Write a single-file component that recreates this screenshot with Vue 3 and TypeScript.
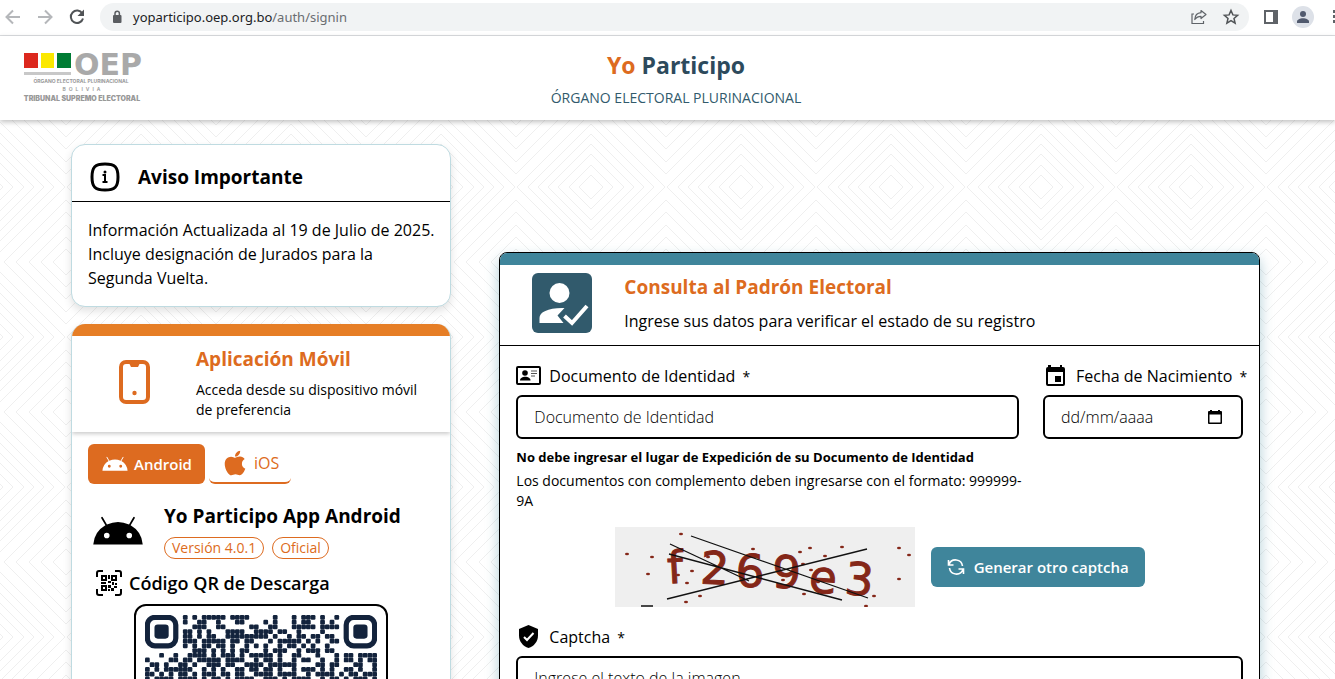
<script setup lang="ts">
import { ref } from 'vue'

interface Cell { x: number; y: number }
interface Glyph { char: string; x: number; y: number; turn: number }

const documento = ref('')
const fecha = ref('')
const captcha = ref('')
const tab = ref<'android' | 'ios'>('android')

const qrRows: string[] = [
  '........1.1.11111.1111.....1...1.111.1..1........',
  '........1..11..1...11....1.1...1.11..1.1.........',
  '..........111..11.....11..11...11111.1111........',
  '........11.1.1...1111..1111.11..1....1...........',
  '........11.1.11..111111111.1..1.11.11.11.........',
  '........111.11111.11.11...1.11111.1.1..11........',
  '........1.1.11.11.1..1.1.1..1.11.1.1..1..........',
  '..........111.1.1.1.11...1.111..1.111.11.........',
  '...1..1..1111.1.111.1.11111.1..11...1...1.11.1111',
  '1....11.11.11111.1111..1.11.1..1.11..1..1.11.1.11',
  '.11.1..11.1..111.11..1111.111111....11.11...11..1',
  '1.1.111111..1.1.1..11.11.11.1..1.111.1.1..11.1..1',
  '11.1.1.11.1.111.11.11..1111.1111..1.1111.1.11.111',
  '1.1111.1111.1.11.1.1111..111.1.1111..1.11.1.111.1',
  '11..11.1.11.111.11..1.11111.1..11.111.11.11.1.111',
]
const qrCells: Cell[] = qrRows.flatMap((row, y) =>
  [...row].flatMap((c, x) => (c === '1' ? [{ x, y }] : [])),
)
const finders: number[] = [0, 42]

const glyphs: Glyph[] = [
  { char: 'f', x: 61, y: 56, turn: -3 },
  { char: '2', x: 99, y: 57, turn: 3 },
  { char: '6', x: 135, y: 60, turn: 0 },
  { char: '9', x: 171, y: 61, turn: 2 },
  { char: 'e', x: 207, y: 66, turn: 4 },
  { char: '3', x: 243, y: 68, turn: 5 },
]
const specks: number[][] = [
  [66, 7], [12, 27], [37, 30], [33, 47], [77, 44], [72, 56], [63, 48], [71, 75], [85, 69],
  [138, 22], [185, 25], [195, 21], [210, 29], [227, 20], [284, 21], [294, 28], [284, 52],
  [188, 37], [196, 43], [168, 53], [189, 67], [203, 55], [259, 69], [251, 79], [93, 30],
]
const androidHead =
  'M17.6 9.48 19.44 6.3a.38.38 0 0 0-.66-.38l-1.87 3.23a11.4 11.4 0 0 0-9.82 0L5.22 5.92a.38.38 0 0 0-.66.38L6.4 9.48A10.8 10.8 0 0 0 1 18h22a10.8 10.8 0 0 0-5.4-8.52ZM7 15.25a1.25 1.25 0 1 1 0-2.5 1.25 1.25 0 0 1 0 2.5Zm10 0a1.25 1.25 0 1 1 0-2.5 1.25 1.25 0 0 1 0 2.5Z'
</script>

<template>
  <div class="window">
    <div class="toolbar">
      <button class="nav" aria-label="Atrás">
        <svg width="18" height="18" viewBox="0 0 18 18"><path d="M16 9H3M9 2.500 2.500 9 9 15.500" fill="none" stroke="#b5b7ba" stroke-width="2" /></svg>
      </button>
      <button class="nav" aria-label="Adelante">
        <svg width="18" height="18" viewBox="0 0 18 18"><path d="M2 9h13M9 2.500 15.500 9 9 15.500" fill="none" stroke="#b5b7ba" stroke-width="2" /></svg>
      </button>
      <button class="nav" aria-label="Recargar">
        <svg width="18" height="18" viewBox="0 0 18 18"><path d="M14.300 5.500A6.200 6.200 0 1 0 15 10.500" fill="none" stroke="#505356" stroke-width="2" /><path d="M16 1.500V8H9.500Z" fill="#505356" /></svg>
      </button>
      <div class="address">
        <svg width="10" height="14" viewBox="0 0 10 14"><rect x="1" y="5" width="8.500" height="8" rx="1" fill="#5a5d61" /><path d="M3 5.500V3.500a2.200 2.200 0 0 1 4.400 0v2" fill="none" stroke="#5a5d61" stroke-width="1.500" /></svg>
        <span class="url"><b>yoparticipo.oep.org.bo</b>/auth/signin</span>
        <button class="nav" aria-label="Compartir">
          <svg width="18" height="18" viewBox="0 0 18 18"><path d="M4 6H2v9.500h11.500V13" fill="none" stroke="#5f6368" stroke-width="1.200" /><path d="M11 2.500l5 4-5 4V8.300C8 8.300 6.300 9.300 4.800 11.500 5 7.500 7.500 5 11 4.700Z" fill="none" stroke="#5f6368" stroke-width="1.200" stroke-linejoin="round" /></svg>
        </button>
        <button class="nav" aria-label="Marcador">
          <svg width="18" height="18" viewBox="0 0 18 18"><path d="m9 2.500 1.900 4.400 4.700.4-3.600 3.200 1.100 4.700L9 12.700l-4.100 2.500L6 10.500 2.400 7.300l4.700-.4Z" fill="none" stroke="#505356" stroke-width="1.500" /></svg>
        </button>
      </div>
      <button class="nav panel" aria-label="Panel lateral">
        <svg width="14" height="14" viewBox="0 0 14 14"><path d="M0 0h14v14H0ZM2 2v10h7V2Z" fill="#5f6368" fill-rule="evenodd" /></svg>
      </button>
      <button class="nav profile" aria-label="Perfil">
        <svg width="22" height="22" viewBox="0 0 22 22"><circle cx="11" cy="11" r="11" fill="#dde1e8" /><circle cx="11" cy="8" r="3" fill="#515a6e" /><path d="M5 17v-1.500c0-2 3-3.300 6-3.300s6 1.300 6 3.300V17Z" fill="#515a6e" /></svg>
      </button>
      <button class="nav more" aria-label="Menú">
        <svg width="4" height="16" viewBox="0 0 4 16"><path d="M0 1h3v3H0zM0 6h3v3H0zM0 11h3v3H0z" fill="#5f6368" /></svg>
      </button>
    </div>

    <header class="site-header">
      <svg class="logo" width="124" height="56" viewBox="0 0 124 56" role="img" aria-label="OEP">
        <path d="M4 4h14v15H4z" fill="#dc281e" /><path d="M21 4h13v15H21z" fill="#fbe800" /><path d="M37 4h14v15H37z" fill="#007c34" /><path d="M4 23h47v3H4z" fill="#c8c8c8" />
        <text x="54" y="26" font-size="30" class="initials">OEP</text>
        <text x="61" y="34" font-size="5" font-weight="700" fill="#999" text-anchor="middle">ÓRGANO ELECTORAL PLURINACIONAL</text>
        <text x="63" y="42" font-size="5" font-weight="600" fill="#999" text-anchor="middle" class="tracked">BOLIVIA</text>
        <text x="62" y="52" font-size="7" font-weight="900" fill="#999" text-anchor="middle">TRIBUNAL SUPREMO ELECTORAL</text>
      </svg>
      <div class="brand">
        <h1><span>Yo</span> Participo</h1>
        <p>ÓRGANO ELECTORAL PLURINACIONAL</p>
      </div>
    </header>

    <main class="content">
      <svg class="backdrop" width="100%" height="100%" aria-hidden="true">
        <defs>
          <pattern id="rombos" width="150" height="150" patternUnits="userSpaceOnUse" patternTransform="translate(66 -8)">
            <g fill="none" stroke="#efefef" stroke-width="1">
              <path v-for="r in [12, 22, 33, 43, 53, 63, 74]" :key="'a' + r" :d="`M75 ${75 - r}L${75 + r} 75L75 ${75 + r}L${75 - r} 75Z`" />
              <template v-for="r in [13, 25, 37, 50, 62]" :key="'b' + r">
                <path :d="`M${r} 0L0 ${r}M${150 - r} 0L150 ${r}M0 ${150 - r}L${r} 150M150 ${150 - r}L${150 - r} 150`" />
              </template>
            </g>
          </pattern>
        </defs>
        <rect width="100%" height="100%" fill="url(#rombos)" />
      </svg>

      <div class="side">
        <section class="card notice">
          <div class="notice-head">
            <svg width="30" height="30" viewBox="0 0 30 30"><path d="M15 2C5 2 2 5 2 15s3 13 13 13 13-3 13-13S25 2 15 2Z" fill="none" stroke="#000" stroke-width="3" /><path d="M12.500 13H15v7M12.500 20h5" fill="none" stroke="#000" stroke-width="2" /><circle cx="15" cy="10" r="1.500" /></svg>
            <h2>Aviso Importante</h2>
          </div>
          <p>Información Actualizada al 19 de Julio de 2025. Incluye designación de Jurados para la Segunda Vuelta.</p>
        </section>

        <section class="card app">
          <div class="app-head">
            <svg width="32" height="46" viewBox="0 0 32 46"><rect x="3" y="2" width="27" height="40" rx="5" fill="none" stroke="#dd6b20" stroke-width="4" /><path d="M11 3h11l-2 4h-7Z" fill="#dd6b20" /><circle cx="16.500" cy="33" r="2.200" fill="#dd6b20" /></svg>
            <div>
              <h2>Aplicación Móvil</h2>
              <p>Acceda desde su dispositivo móvil de preferencia</p>
            </div>
          </div>
          <div class="app-body">
            <div class="tabs" role="tablist">
              <button class="tab android" role="tab" :aria-selected="tab === 'android'" @click="tab = 'android'">
                <svg width="28" height="16" viewBox="0 5 24 14"><path :d="androidHead" fill="#fff" /></svg>
                Android
              </button>
              <button class="tab ios" role="tab" :aria-selected="tab === 'ios'" @click="tab = 'ios'">
                <svg width="22" height="28" viewBox="0 0 384 512"><path d="M318.700 268.700c-.2-36.700 16.400-64.400 50-84.800-18.800-26.900-47.200-41.700-84.700-44.600-35.500-2.800-74.300 20.700-88.500 20.700-15 0-49.400-19.700-76.400-19.700C63.300 141.200 4 184.800 4 273.500q0 39.300 14.400 81.200c12.800 36.700 59 126.700 107.200 125.200 25.200-.6 43-17.900 75.800-17.900 31.800 0 48.300 17.900 76.400 17.900 48.600-.7 90.400-82.500 102.600-119.300-65.200-30.700-61.700-90-61.700-91.900ZM262.100 104.500c27.300-32.400 24.800-61.900 24-72.500-24.100 1.400-52 16.400-67.900 34.900-17.500 19.800-27.800 44.300-25.600 71.900 26.100 2 49.900-11.400 69.500-34.300Z" fill="#dd6b20" /></svg>
                iOS
              </button>
            </div>
            <div class="release">
              <svg width="54" height="32" viewBox="0 5 24 14"><path :d="androidHead" /></svg>
              <div>
                <h3>Yo Participo App Android</h3>
                <div class="badges"><span>Versión 4.0.1</span><span>Oficial</span></div>
              </div>
            </div>
            <div class="qr-title">
              <svg width="26" height="26" viewBox="0 0 26 26"><path d="M1 7V3a2 2 0 0 1 2-2h4M19 1h4a2 2 0 0 1 2 2v4M25 19v4a2 2 0 0 1-2 2h-4M7 25H3a2 2 0 0 1-2-2v-4" fill="none" stroke="#000" stroke-width="2" /><path d="M6 6h4v4H6zM16 6h4v4h-4zM6 16h4v4H6z" fill="none" stroke="#000" stroke-width="2" /><path d="M12 5h2v4h-2zM12 11h3v2h-3zM5 12h5v2H5zM16 12h2v3h-2zM19 13h2v2h-2zM12 15h3v3h-3zM15 18h3v3h-3zM18 16h3v2h-3zM12 19h2v2h-2z" /></svg>
              <h4>Código QR de Descarga</h4>
            </div>
            <div class="qr">
              <svg viewBox="0 0 49 15" role="img" aria-label="Código QR de descarga" fill="#13233c">
                <rect v-for="(c, i) in qrCells" :key="i" :x="c.x" :y="c.y" width="1" height="1" rx="0.250" />
                <g v-for="x in finders" :key="'f' + x">
                  <rect :x="x + 0.5" y="0.500" width="6" height="6" rx="1.600" fill="none" stroke="#13233c" stroke-width="1.100" />
                  <rect :x="x + 2" y="2" width="3" height="3" rx="0.700" />
                </g>
              </svg>
            </div>
          </div>
        </section>
      </div>

      <section class="query">
        <div class="query-head">
          <svg width="60" height="60" viewBox="0 0 60 60"><rect width="60" height="60" rx="6" fill="#315a6c" /><circle cx="27.500" cy="20" r="10" fill="#fff" /><path d="M7.500 50v-5c0-6 9-10.500 25-10l-7 7.500 6 7.500Z" fill="#fff" /><path d="m32.500 43 7.500 7L55 33" fill="none" stroke="#fff" stroke-width="4" /></svg>
          <div>
            <h2>Consulta al Padrón Electoral</h2>
            <p>Ingrese sus datos para verificar el estado de su registro</p>
          </div>
        </div>
        <form class="form" @submit.prevent>
          <div class="fields">
            <div>
              <label for="doc">
                <svg width="25" height="20" viewBox="0 0 25 20"><rect x="1" y="1" width="23" height="17" rx="1" fill="none" stroke="#000" stroke-width="2" /><circle cx="9" cy="7" r="2.800" /><path d="M4 14.500c0-5 10.500-5 10.500 0Z" /><path d="M15 5h6M15 7.500h6M15 10h4" stroke="#555" stroke-width="1" /></svg>
                <span>Documento de Identidad <i>*</i></span>
              </label>
              <input id="doc" v-model="documento" type="text" placeholder="Documento de Identidad">
              <p class="warn">No debe ingresar el lugar de Expedición de su Documento de Identidad</p>
              <p class="hint">Los documentos con complemento deben ingresarse con el formato: 999999-<wbr>9A</p>
            </div>
            <div>
              <label for="nac">
                <svg width="25" height="22" viewBox="0 0 25 22"><path d="M5 0h3v2h9V0h2v2h1a2 2 0 0 1 2 2v15a2 2 0 0 1-2 2H5a2 2 0 0 1-2-2V4a2 2 0 0 1 2-2ZM5 7v12h15V7Z" fill-rule="evenodd" /><path d="M12 11h6v6h-6z" /></svg>
                <span>Fecha de Nacimiento <i>*</i></span>
              </label>
              <div class="date">
                <input id="nac" v-model="fecha" type="text" placeholder="dd/mm/aaaa">
                <button type="button" aria-label="Abrir calendario">
                  <svg width="14" height="15" viewBox="0 0 14 15"><path d="M2 0h2v1h6V0h2v1h1a1 1 0 0 1 1 1v11a1 1 0 0 1-1 1H1a1 1 0 0 1-1-1V2a1 1 0 0 1 1-1h1ZM1.500 4.500v8h11v-8Z" fill-rule="evenodd" /></svg>
                </button>
              </div>
            </div>
          </div>

          <div class="challenge">
            <svg width="300" height="80" viewBox="0 0 300 80" role="img" aria-label="Imagen captcha">
              <rect width="300" height="80" fill="#efefef" />
              <text v-for="g in glyphs" :key="g.char" :x="g.x" :y="g.y" :transform="`rotate(${g.turn} ${g.x} ${g.y})`" class="captcha-glyph">{{ g.char }}</text>
              <ellipse v-for="(s, i) in specks" :key="i" :cx="s[0]" :cy="s[1]" rx="2" ry="1.300" fill="#842718" />
              <path d="M55 17 134 54M76 9l177 62M54 27l173 46M52 72 252 22M26 79h12" stroke="#111" stroke-width="1.300" fill="none" />
            </svg>
            <button type="button" class="refresh">
              <svg width="18" height="18" viewBox="0 0 18 18"><path d="M2 6.500A7 7 0 0 1 15.500 8M16 11.500A7 7 0 0 1 2.500 10M1.500 2v5h5M16.500 16v-5h-5" fill="none" stroke="#fff" stroke-width="1.600" /></svg>
              Generar otro captcha
            </button>
          </div>

          <label for="cap">
            <svg width="25" height="24" viewBox="0 0 25 24"><path d="m12.500 0 9.500 4v6.500c0 6-4 10.800-9.500 12.500C7 21.300 3 16.500 3 10.500V4Z" /><path d="m8 12 3 3 6.500-7" fill="none" stroke="#fff" stroke-width="2" /></svg>
            <span>Captcha <i>*</i></span>
          </label>
          <input id="cap" v-model="captcha" type="text" placeholder="Ingrese el texto de la imagen">
        </form>
      </section>
    </main>
  </div>
</template>

<style>
body { overflow: hidden; background: #fff; }
</style>

<style scoped>
* { box-sizing: border-box; }
.window { height: 100vh; overflow: hidden; display: flex; flex-direction: column; background: #fff; color: #000; font-family: "Open Sans", "Noto Sans", sans-serif; font-size: 16px; line-height: 24px; }
h1, h2, h3, h4, p { margin: 0; font-weight: 700; }
p { font-weight: 400; }
svg { display: block; flex: none; }
button, input { font: inherit; color: inherit; }
button { padding: 0; border: 0; background: none; display: flex; align-items: center; cursor: pointer; }
.toolbar { height: 36px; flex: none; display: flex; align-items: center; padding: 0 0 2px 4px; border-bottom: 1px solid #dcdee1; overflow: hidden; }
.toolbar > .nav { margin-right: 14px; }
.address { flex: 1; height: 28px; display: flex; align-items: center; gap: 14px; padding: 0 9px 0 12px; border-radius: 14px; background: #f1f3f4; }
.url { flex: 1; margin-left: -3px; font-family: "Noto Sans", sans-serif; font-size: 13px; color: #6a6d71; }
.url b { font-weight: 400; color: #202124; }
.toolbar > .panel { margin: 0 14px 0 15px; }
.toolbar > .profile { margin-right: 19px; }
.toolbar > .more { margin: 0 -2px 0 0; }
.site-header { flex: none; position: relative; z-index: 1; height: 84px; display: flex; align-items: flex-start; padding: 13px 127px 0 20px; background: #fff; box-shadow: 0 2px 5px rgba(0, 0, 0, .25); }
.logo { overflow: visible; font-family: Inter, "Liberation Sans", sans-serif; }
.initials { font-family: "DejaVu Sans", sans-serif; font-weight: 700; fill: #a9a9a9; }
.tracked { letter-spacing: 3px; }
.brand { flex: 1; text-align: center; }
.brand h1 { font-size: 23px; line-height: 32px; color: #2d4a5c; }
.brand h1 span { color: #dd6b20; }
.brand p { margin-top: 5px; font-size: 14px; color: #315a6c; }
.content { position: relative; flex: 1; min-height: 0; display: grid; grid-template-columns: 1fr 2fr; gap: 48px; align-items: start; padding: 24px 75px 0 71px; }
.backdrop { position: absolute; inset: 0; }
.side, .query { position: relative; }
.side { display: flex; flex-direction: column; gap: 17px; }
.card { background: #fff; border: 1px solid #bfdbe1; border-radius: 14px; overflow: hidden; box-shadow: 0 4px 8px rgba(0, 0, 0, .12); }
.notice-head { height: 57px; display: flex; align-items: center; gap: 18px; padding: 8px 18px 0; border-bottom: 1px solid #000; }
h2, h3 { font-size: 19px; line-height: 28px; }
h4 { font-size: 18px; font-weight: 600; }
.notice p { padding: 16px 12px 16px 16px; }
.app { border-top: 0; }
.app-head { display: flex; align-items: center; gap: 46px; padding: 9px 30px 12px 46px; border-top: 12px solid #e67e26; box-shadow: 0 2px 4px rgba(0, 0, 0, .2); }
.app-head h2, .query h2 { color: #dd6b20; }
.app-head p { margin-top: 7px; font-size: 14px; line-height: 20px; }
.app-body { padding: 12px 16px; }
.tabs { display: flex; gap: 4px; }
.tab { height: 40px; border-radius: 6px; font-size: 15px; }
.android { padding: 0 13px; gap: 5px; color: #fff; background: #dd6b20; font-weight: 600; }
.ios { padding: 0 12px 0 15px; gap: 8px; color: #dd6b20; border-bottom: 2px solid #dd6b20; font-size: 16px; }
.release { display: flex; align-items: center; gap: 19px; padding: 18px 0 0 3px; }
.badges { display: flex; gap: 8px; margin-top: 7px; }
.badges span { padding: 0 7px; border: 1px solid #dd6b20; border-radius: 11px; color: #dd6b20; font-size: 14px; line-height: 20px; }
.qr-title { display: flex; align-items: center; gap: 7px; padding: 11px 0 0 8px; }
.qr { width: 254px; margin: 8px auto 0 46px; padding: 9px; border: 2px solid #000; border-radius: 12px; }
.qr svg { width: 100%; }
.query { margin-top: 108px; background: #fff; border: 1px solid #000; border-radius: 8px; box-shadow: 0 6px 14px rgba(63, 133, 155, .4); }
.query-head { display: flex; gap: 32px; padding: 8px 32px 12px; border-top: 12px solid #3f859b; border-bottom: 1px solid #000; border-radius: 7px 7px 0 0; }
.query-head p { margin-top: 8px; }
.form { padding: 16px; }
.fields { display: grid; grid-template-columns: minmax(0, 1fr) 200px; gap: 24px; }
label { display: flex; align-items: center; gap: 8px; height: 28px; white-space: nowrap; }
label i { margin-left: 3px; font-style: normal; font-size: 14px; }
input { display: block; width: 100%; height: 44px; padding: 0 16px; border: 2px solid #000; border-radius: 6px; background: #fff; font-weight: 300; outline: 0; }
label + input, .date { margin-top: 5px; }
input::placeholder { color: #000; opacity: 1; }
.date { display: flex; align-items: center; border: 2px solid #000; border-radius: 6px; padding-right: 19px; }
.date input { flex: 1; min-width: 0; height: 40px; border: 0; }
.warn, .hint { font-size: 14px; line-height: 20px; }
.warn { margin-top: 8px; font-size: 13px; font-weight: 700; }
.hint { margin: 4px -12px 0 0; }
.challenge { display: flex; justify-content: center; align-items: center; gap: 16px; margin: 16px 0; }
.captcha-glyph { font-family: "DejaVu Sans", sans-serif; font-size: 45px; fill: #842718; stroke: #842718; text-anchor: middle; }
.refresh { height: 40px; gap: 9px; padding: 0 16px; border-radius: 6px; background: #3f859b; color: #fff; font-size: 15px; font-weight: 600; }
</style>
